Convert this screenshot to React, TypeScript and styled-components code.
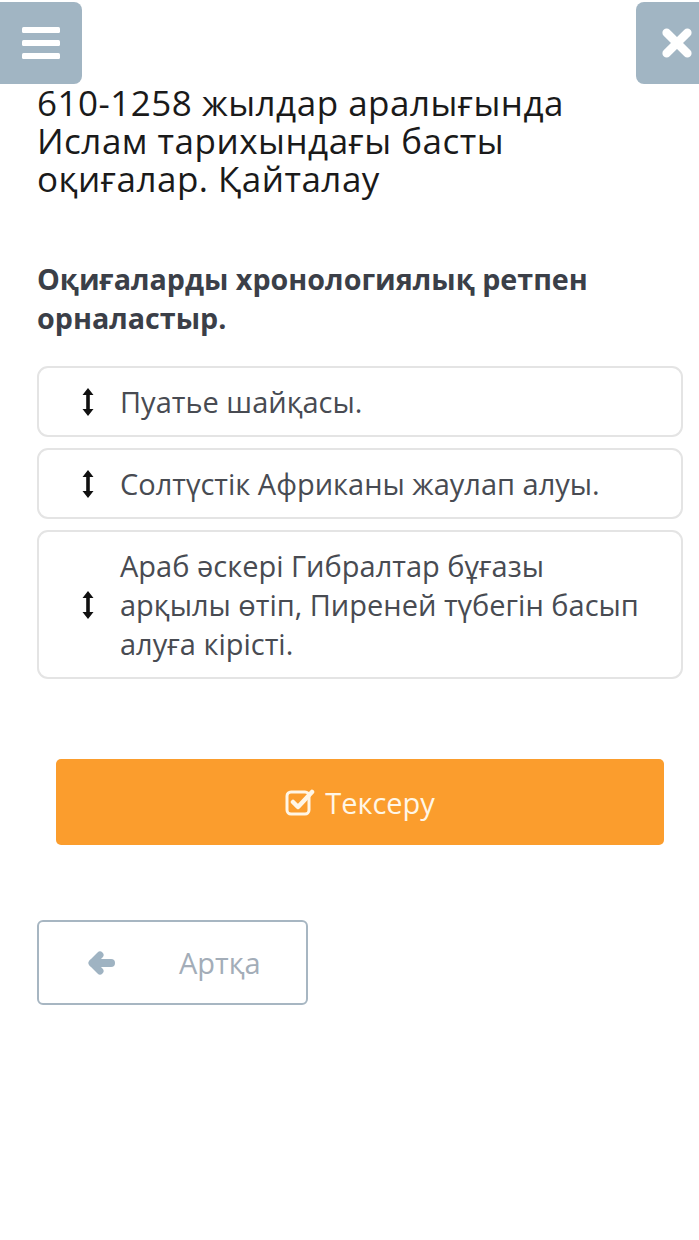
import styled, { createGlobalStyle } from "styled-components";

const GlobalStyle = createGlobalStyle`
  body {
    margin: 0;
    background: #ffffff;
    font-family: "Open Sans", "Liberation Sans", sans-serif;
  }
`;

const Page = styled.div`
  width: 699px;
  min-height: 1240px;
  background: #ffffff;
`;

const TopBar = styled.div`
  display: flex;
  justify-content: space-between;
  padding-top: 2px;
  height: 82px;
`;

const IconButton = styled.button<{ side: "left" | "right" }>`
  width: ${(p) => (p.side === "left" ? "82px" : "63px")};
  height: 82px;
  border: none;
  background: #a1b5c3;
  border-radius: ${(p) => (p.side === "left" ? "0 8px 8px 0" : "8px 0 0 8px")};
  display: flex;
  align-items: center;
  justify-content: ${(p) => (p.side === "left" ? "center" : "flex-end")};
  padding: ${(p) => (p.side === "left" ? "0" : "0 6px 0 0")};
`;

const Content = styled.div`
  padding: 0 16px 0 37px;
`;

const Title = styled.h1`
  margin: 0;
  font-family: "Open Sans", sans-serif;
  font-weight: 400;
  font-size: 35px;
  letter-spacing: 0.5px;
  line-height: 38px;
  color: #1a1a1a;
  padding-right: 90px;
`;

const Question = styled.h2`
  margin: 61px 0 0;
  font-weight: 700;
  font-size: 28.7px;
  line-height: 39px;
  color: #3b3f48;
`;

const List = styled.div`
  margin-top: 29px;
  display: flex;
  flex-direction: column;
  gap: 11px;
`;

const Card = styled.div`
  display: flex;
  align-items: center;
  border: 2px solid #e4e4e4;
  border-radius: 11px;
  padding: 14px 20px 14px 38px;
  box-sizing: border-box;
`;

const Handle = styled.span`
  width: 22px;
  display: flex;
  justify-content: center;
  margin-right: 21px;
  flex-shrink: 0;
`;

const CardText = styled.span`
  font-size: 29px;
  line-height: 39px;
  color: #484b52;
`;

const CheckButton = styled.button`
  margin: 80px 0 0 19px;
  width: 608px;
  height: 86px;
  border: none;
  border-radius: 5px;
  background: #fb9d2d;
  color: #fff6e6;
  display: flex;
  align-items: center;
  justify-content: center;
  gap: 10px;
  font-family: "Open Sans", sans-serif;
  font-size: 29px;
`;

const BackButton = styled.button`
  margin-top: 75px;
  width: 271px;
  height: 85px;
  border: 2px solid #a7b6c2;
  border-radius: 6px;
  background: #ffffff;
  display: flex;
  align-items: center;
  padding: 0 0 0 48px;
  box-sizing: border-box;
  font-family: "Open Sans", sans-serif;
  font-size: 29px;
  color: #a3adb8;
`;

const BackLabel = styled.span`
  margin-left: 64px;
`;

function ArrowsV() {
  return (
    <svg width="12" height="30" viewBox="0 0 12 30">
      <path d="M6 1 L11.5 8 H7.8 V22 H11.5 L6 29 L0.5 22 H4.2 V8 H0.5 Z" fill="#111" />
    </svg>
  );
}

const items = [
  "Пуатье шайқасы.",
  "Солтүстік Африканы жаулап алуы.",
  "Араб әскері Гибралтар бұғазы арқылы өтіп, Пиреней түбегін басып алуға кірісті.",
];

export default function App() {
  return (
    <Page>
      <GlobalStyle />
      <TopBar>
        <IconButton side="left">
          <svg width="38" height="32" viewBox="0 0 38 32">
            <rect x="0" y="0" width="38" height="6" rx="1.5" fill="#fff" />
            <rect x="0" y="13" width="38" height="6" rx="1.5" fill="#fff" />
            <rect x="0" y="26" width="38" height="6" rx="1.5" fill="#fff" />
          </svg>
        </IconButton>
        <IconButton side="right">
          <svg width="32" height="32" viewBox="0 0 34 34">
            <path d="M6 6 L28 28 M28 6 L6 28" stroke="#fff" strokeWidth="9" strokeLinecap="round" />
          </svg>
        </IconButton>
      </TopBar>
      <Content>
        <Title>
          610-1258 жылдар аралығында Ислам тарихындағы басты оқиғалар. Қайталау
        </Title>
        <Question>Оқиғаларды хронологиялық ретпен орналастыр.</Question>
        <List>
          {items.map((t) => (
            <Card key={t}>
              <Handle>
                <ArrowsV />
              </Handle>
              <CardText>{t}</CardText>
            </Card>
          ))}
        </List>
        <CheckButton>
          <svg width="30" height="28" viewBox="0 0 30 28">
            <rect x="2" y="4" width="22" height="22" rx="4" fill="none" stroke="#fff6e6" strokeWidth="3" />
            <path d="M8 14 L13 19 L27 4" fill="none" stroke="#fff6e6" strokeWidth="4.5" strokeLinecap="round" strokeLinejoin="round" />
          </svg>
          Тексеру
        </CheckButton>
        <BackButton>
          <svg width="28" height="24" viewBox="0 0 28 24">
            <path d="M6 12 H24" stroke="#9fb3c2" strokeWidth="8" strokeLinecap="round" />
            <path d="M13 4 L5 12 L13 20" fill="none" stroke="#9fb3c2" strokeWidth="7" strokeLinecap="round" strokeLinejoin="round" />
          </svg>
          <BackLabel>Артқа</BackLabel>
        </BackButton>
      </Content>
    </Page>
  );
}
